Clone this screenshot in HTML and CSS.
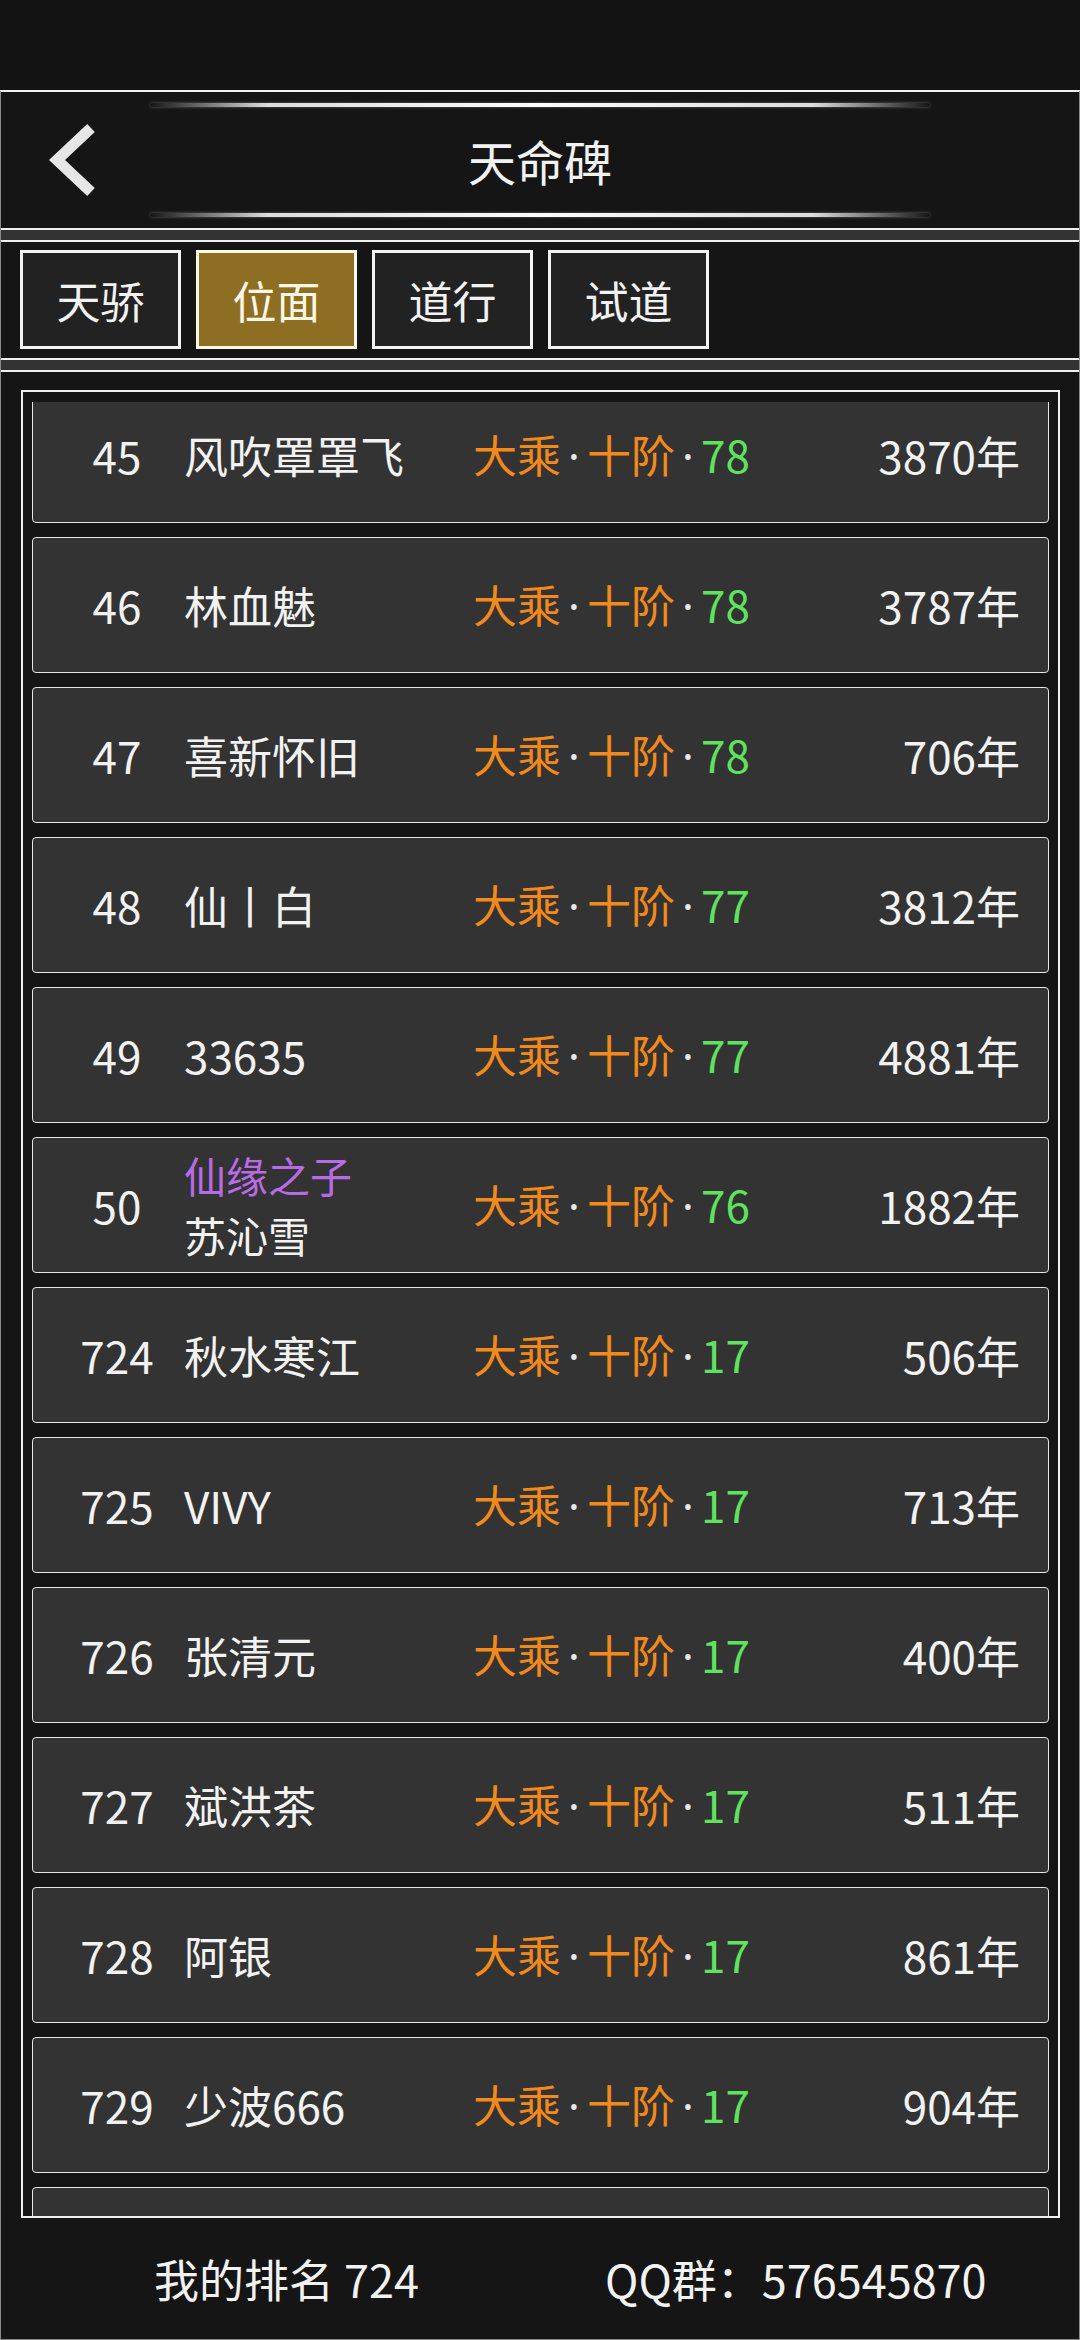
FILE: index.html
```html
<!DOCTYPE html>
<html lang="zh-CN">
<head>
    <meta charset="UTF-8">
    <meta name="viewport" content="width=device-width, initial-scale=1.0">
    <title>天命碑</title>
    <link rel="stylesheet" href="styles.css">
</head>
<body>
    <div class="status-bar"></div>

    <div class="app">
        <div class="header">
            <div class="back">
                <svg width="149" height="136" viewBox="0 0 149 136">
                    <polyline points="90,36 56,68 90,100" fill="none" stroke="#e6e6e6" stroke-width="11" stroke-linejoin="miter"></polyline>
                </svg>
            </div>
            <div class="title-wrap">
                <div class="glow"></div>
                <div class="title">天命碑</div>
                <div class="glow"></div>
            </div>
            <div></div>
        </div>

        <div class="band"></div>

        <div class="tabs">
            <div class="tab">天骄</div>
            <div class="tab active">位面</div>
            <div class="tab">道行</div>
            <div class="tab">试道</div>
        </div>

        <div class="band"></div>

        <div class="board">
            <div class="frame">
                <div class="viewport">
                    <div class="list">
                        <div class="row">
                            <div class="rank">45</div>
                            <div class="name">风吹罩罩飞</div>
                            <div class="realm"><span class="or">大乘</span><span class="dot">·</span><span class="or">十阶</span><span class="dot">·</span><span class="gr">78</span></div>
                            <div class="age">3870年</div>
                        </div>
                        <div class="row">
                            <div class="rank">46</div>
                            <div class="name">林血魅</div>
                            <div class="realm"><span class="or">大乘</span><span class="dot">·</span><span class="or">十阶</span><span class="dot">·</span><span class="gr">78</span></div>
                            <div class="age">3787年</div>
                        </div>
                        <div class="row">
                            <div class="rank">47</div>
                            <div class="name">喜新怀旧</div>
                            <div class="realm"><span class="or">大乘</span><span class="dot">·</span><span class="or">十阶</span><span class="dot">·</span><span class="gr">78</span></div>
                            <div class="age">706年</div>
                        </div>
                        <div class="row">
                            <div class="rank">48</div>
                            <div class="name">仙丨白</div>
                            <div class="realm"><span class="or">大乘</span><span class="dot">·</span><span class="or">十阶</span><span class="dot">·</span><span class="gr">77</span></div>
                            <div class="age">3812年</div>
                        </div>
                        <div class="row">
                            <div class="rank">49</div>
                            <div class="name">33635</div>
                            <div class="realm"><span class="or">大乘</span><span class="dot">·</span><span class="or">十阶</span><span class="dot">·</span><span class="gr">77</span></div>
                            <div class="age">4881年</div>
                        </div>
                        <div class="row">
                            <div class="rank">50</div>
                            <div class="name two-line">
                                <div class="title-tag">仙缘之子</div>
                                <div>苏沁雪</div>
                            </div>
                            <div class="realm"><span class="or">大乘</span><span class="dot">·</span><span class="or">十阶</span><span class="dot">·</span><span class="gr">76</span></div>
                            <div class="age">1882年</div>
                        </div>
                        <div class="row">
                            <div class="rank">724</div>
                            <div class="name">秋水寒江</div>
                            <div class="realm"><span class="or">大乘</span><span class="dot">·</span><span class="or">十阶</span><span class="dot">·</span><span class="gr">17</span></div>
                            <div class="age">506年</div>
                        </div>
                        <div class="row">
                            <div class="rank">725</div>
                            <div class="name">VIVY</div>
                            <div class="realm"><span class="or">大乘</span><span class="dot">·</span><span class="or">十阶</span><span class="dot">·</span><span class="gr">17</span></div>
                            <div class="age">713年</div>
                        </div>
                        <div class="row">
                            <div class="rank">726</div>
                            <div class="name">张清元</div>
                            <div class="realm"><span class="or">大乘</span><span class="dot">·</span><span class="or">十阶</span><span class="dot">·</span><span class="gr">17</span></div>
                            <div class="age">400年</div>
                        </div>
                        <div class="row">
                            <div class="rank">727</div>
                            <div class="name">斌洪茶</div>
                            <div class="realm"><span class="or">大乘</span><span class="dot">·</span><span class="or">十阶</span><span class="dot">·</span><span class="gr">17</span></div>
                            <div class="age">511年</div>
                        </div>
                        <div class="row">
                            <div class="rank">728</div>
                            <div class="name">阿银</div>
                            <div class="realm"><span class="or">大乘</span><span class="dot">·</span><span class="or">十阶</span><span class="dot">·</span><span class="gr">17</span></div>
                            <div class="age">861年</div>
                        </div>
                        <div class="row">
                            <div class="rank">729</div>
                            <div class="name">少波666</div>
                            <div class="realm"><span class="or">大乘</span><span class="dot">·</span><span class="or">十阶</span><span class="dot">·</span><span class="gr">17</span></div>
                            <div class="age">904年</div>
                        </div>
                        <div class="row"></div>
                    </div>
                </div>
            </div>
        </div>

        <div class="footer">
            <div>我的排名 724</div>
            <div>QQ群：576545870</div>
        </div>
    </div>
</body>
</html>
```

FILE: styles.css
```css
* {
    box-sizing: border-box;
}

body {
    margin: 0;
    width: 1080px;
    height: 2340px;
    overflow: hidden;
    background: #151515;
    color: #f2f2f2;
    font-family: "Noto Sans CJK SC", "Noto Sans", sans-serif;
}

.status-bar {
    height: 90px;
    background: #131313;
}

.app {
    height: 2250px;
    display: flex;
    flex-direction: column;
    border-top: 2px solid #f0f0f0;
    border-left: 1px solid #8a8a8a;
    border-right: 1px solid #8a8a8a;
    border-bottom: 1px solid #8a8a8a;
}

/* header */
.header {
    height: 136px;
    flex-shrink: 0;
    display: grid;
    grid-template-columns: 149px 1fr 149px;
}

.back svg {
    display: block;
}

.title-wrap {
    display: flex;
    flex-direction: column;
    justify-content: space-between;
    padding: 11px 0;
}

.glow {
    height: 4px;
    border-radius: 2px;
    background: linear-gradient(to right, rgba(255,255,255,0), rgba(255,255,255,0.85) 15%, #fff 50%, rgba(255,255,255,0.85) 85%, rgba(255,255,255,0));
    box-shadow: 0 0 3px rgba(255,255,255,0.35);
}

.title {
    font-size: 48px;
    line-height: 1;
    text-align: center;
}

.band {
    height: 14px;
    flex-shrink: 0;
    background: #333;
    border-top: 2px solid #f0f0f0;
    border-bottom: 2px solid #f0f0f0;
}

/* tabs */
.tabs {
    height: 116px;
    flex-shrink: 0;
    display: flex;
    gap: 15px;
    padding: 8px 0 0 19px;
}

.tab {
    width: 161px;
    height: 99px;
    border: 3px solid #f4f4f4;
    background: #222;
    font-size: 44px;
    display: flex;
    align-items: center;
    justify-content: center;
}

.tab.active {
    background: #8e6e22;
    border-color: #fff8e6;
    color: #fff8e6;
}

/* ranking list */
.board {
    flex: 1;
    min-height: 0;
    display: flex;
    padding: 18px 19px 0 20px;
}

.frame {
    flex: 1;
    display: flex;
    flex-direction: column;
    border: 2px solid #f0f0f0;
    padding: 10px 9px 0;
}

.viewport {
    flex: 1;
    overflow: hidden;
}

.list {
    margin-top: -15px;
    display: flex;
    flex-direction: column;
    gap: 14px;
}

.row {
    height: 136px;
    flex-shrink: 0;
    background: #333;
    border: 1px solid #e6e6e6;
    border-radius: 4px;
    display: grid;
    grid-template-columns: 110px 273px 1fr auto;
    column-gap: 14px;
    align-items: center;
    padding: 0 28px 0 29px;
    font-size: 44px;
    line-height: 1.2;
}

.rank {
    text-align: center;
}

.name {
    margin-left: -2px;
}

.name.two-line {
    font-size: 42px;
    line-height: 60px;
}

.title-tag {
    color: #b96be6;
}

.realm {
    white-space: nowrap;
}

.or {
    color: #f28a1b;
}

.gr {
    color: #5fe35f;
}

.dot {
    display: inline-block;
    width: 26px;
    text-align: center;
    font-family: "Noto Sans", sans-serif;
    color: #e8e8e8;
}

.age {
    text-align: right;
}

/* footer */
.footer {
    height: 121px;
    flex-shrink: 0;
    display: flex;
    align-items: center;
    gap: 186px;
    padding-left: 153px;
    font-size: 45px;
}
```
